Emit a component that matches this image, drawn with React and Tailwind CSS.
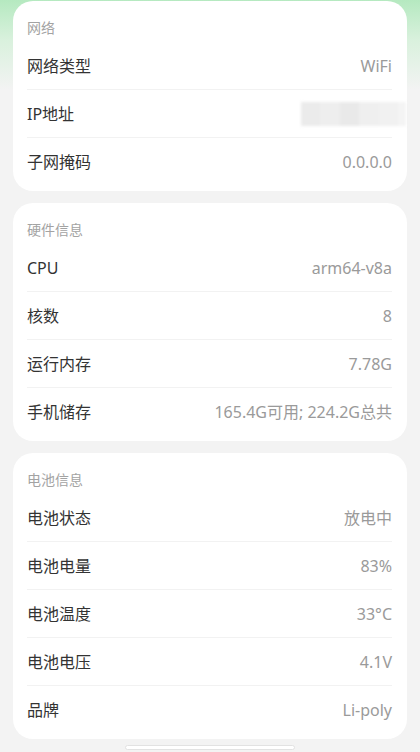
import React from 'react';

const sections = [
  {
    title: '网络',
    rows: [
      { label: '网络类型', value: 'WiFi' },
      { label: 'IP地址', value: null },
      { label: '子网掩码', value: '0.0.0.0' },
    ],
  },
  {
    title: '硬件信息',
    rows: [
      { label: 'CPU', value: 'arm64-v8a' },
      { label: '核数', value: '8' },
      { label: '运行内存', value: '7.78G' },
      { label: '手机储存', value: '165.4G可用; 224.2G总共' },
    ],
  },
  {
    title: '电池信息',
    rows: [
      { label: '电池状态', value: '放电中' },
      { label: '电池电量', value: '83%' },
      { label: '电池温度', value: '33°C' },
      { label: '电池电压', value: '4.1V' },
      { label: '品牌', value: 'Li-poly' },
    ],
  },
];

// blurred-out ip address
const Masked = () => (
  <div className="flex h-6 w-[105px] -mr-[14px] blur-[1.5px]">
    <div className="flex-1 bg-[#ebebeb]" />
    <div className="flex-1 bg-[#eeeeee]" />
    <div className="flex-1 bg-[#e9e9e9]" />
    <div className="flex-1 bg-[#efefef]" />
    <div className="flex-1 bg-[#f1f1f1]" />
    <div className="w-2 bg-[#f4f4f4]" />
  </div>
);

const Card = ({ title, rows }) => (
  <div className="bg-white rounded-[20px] pl-[14px] pr-[15px] pt-[17px] pb-[5px]">
    <div className="h-5 mb-1 text-[14px] leading-5 text-[#a3a3a3]">{title}</div>
    {rows.map((r, i) => (
      <div
        key={r.label}
        className={
          'h-12 flex items-center justify-between ' +
          (i < rows.length - 1 ? 'border-b border-[#f2f2f2]' : '')
        }
      >
        <span className="text-[16px] text-[#333333]">{r.label}</span>
        {r.value === null ? <Masked /> : <span className="text-[16px] text-[#9a9a9a]">{r.value}</span>}
      </div>
    ))}
  </div>
);

export default function App() {
  return (
    <div
      className="w-[420px] h-[752px] overflow-hidden bg-[linear-gradient(180deg,#b5e9c0_0px,#d9f1dd_40px,#f3f3f3_90px,#f3f3f3_100%)] flex flex-col"
      style={{ fontFamily: '"Noto Sans", "Noto Sans CJK SC", sans-serif' }}
    >
      <div className="px-[13px] pt-px flex flex-col gap-3">
        {sections.map((s) => (
          <Card key={s.title} {...s} />
        ))}
      </div>
      <div className="mt-auto mb-[2px] flex justify-center">
        <div className="w-[170px] h-[5px] rounded-full bg-white border border-[#e2e2e2]" />
      </div>
    </div>
  );
}
